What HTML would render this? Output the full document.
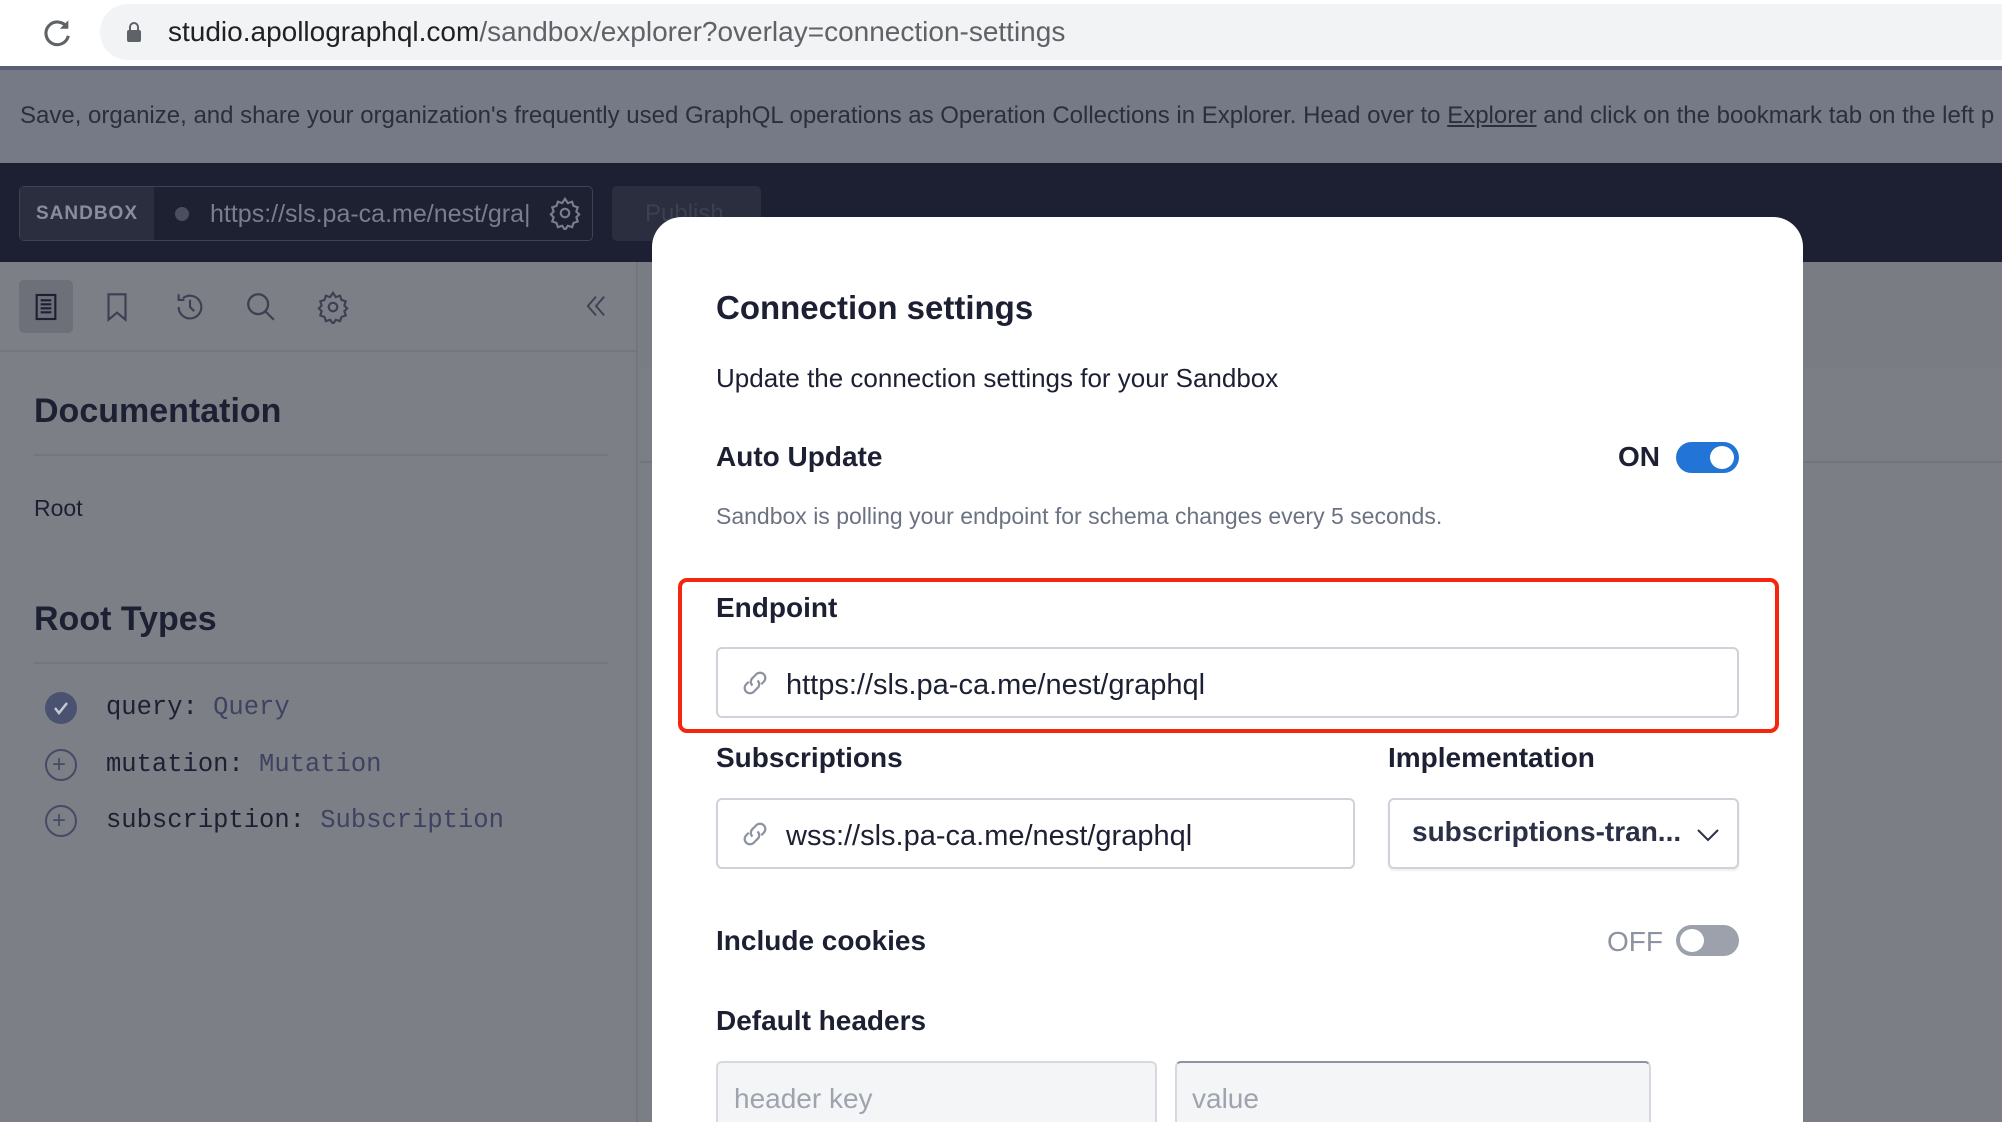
<!DOCTYPE html>
<html style="overflow:hidden;width:2002px;height:1122px"><head><meta charset="utf-8"><style>
*{box-sizing:border-box;margin:0;padding:0}
body{width:2002px;height:1122px;overflow:hidden;position:relative;background:#7c7e85;font-family:"Liberation Sans",sans-serif}
.abs{position:absolute}
.t{position:absolute;white-space:nowrap;line-height:1}
</style></head><body>
<!-- browser bar -->
<div class="abs" style="left:0;top:0;width:2002px;height:68px;background:#fff"></div>
<svg class="abs" style="left:40px;top:16px" width="34" height="34" viewBox="0 0 24 24"><path d="M19 8a8 8 0 1 0 1 6" fill="none" stroke="#5f6368" stroke-width="2.2"/><path d="M20 3v6h-6z" fill="#5f6368"/></svg>
<div class="abs" style="left:100px;top:4px;width:1902px;height:56px;background:#f1f3f4;border-radius:28px 0 0 28px"></div>
<svg class="abs" style="left:126px;top:21px" width="16" height="22" viewBox="0 0 16 22"><path d="M4 9V6a4 4 0 0 1 8 0v3" fill="none" stroke="#5f6368" stroke-width="2"/><rect x="1" y="9" width="14" height="12" rx="2" fill="#5f6368"/></svg>
<div class="t" style="left:168px;top:18px;font-size:28px;color:#202124">studio.apollographql.com<span style="color:#5f6368">/sandbox/explorer?overlay=connection-settings</span></div>
<div class="abs" style="left:0;top:66px;width:2002px;height:4px;background:#5a5f72"></div>
<!-- banner -->
<div class="abs" style="left:0;top:70px;width:2002px;height:93px;background:#767a86"></div>
<div class="t" style="left:20px;top:104px;font-size:24px;color:#2b2f3d">Save, organize, and share your organization's frequently used GraphQL operations as Operation Collections in Explorer. Head over to <u>Explorer</u> and click on the bookmark tab on the left p</div>
<!-- dark header -->
<div class="abs" style="left:0;top:163px;width:2002px;height:99px;background:#1c2032"></div>
<div class="abs" style="left:19px;top:186px;width:574px;height:55px;border:1.5px solid #3d4256;border-radius:5px;background:#1d2132"></div>
<div class="abs" style="left:20px;top:187px;width:134px;height:53px;background:#2a2e3e"></div>
<div class="t" style="left:36px;top:204px;font-size:19px;font-weight:bold;color:#8a8e9c;letter-spacing:1px">SANDBOX</div>
<div class="abs" style="left:175px;top:207px;width:14px;height:14px;border-radius:50%;background:#4a4e5e"></div>
<div class="t" style="left:210px;top:202px;font-size:25px;color:#7a7e8c">https://sls.pa-ca.me/nest/gra|</div>
<svg class="abs" style="left:548px;top:196px" width="34" height="34" viewBox="0 0 24 24" fill="none" stroke="#7a7e8c" stroke-width="1.5"><circle cx="12" cy="12" r="3"/><path d="M12 2l2 3 3-1 1 3 3 1-1 3 2 2-2 2 1 3-3 1-1 3-3-1-2 3-2-3-3 1-1-3-3-1 1-3-2-2 2-2-1-3 3-1 1-3 3 1z"/></svg>
<div class="abs" style="left:612px;top:186px;width:149px;height:55px;border-radius:5px;background:#2a2e3e"></div>
<div class="t" style="left:645px;top:202px;font-size:24px;color:#3c4152">Publish</div>
<!-- left panel -->
<div class="abs" style="left:0;top:262px;width:638px;height:860px;background:#7d7f86;border-right:2px solid #74767d"></div>
<div class="abs" style="left:0;top:350px;width:638px;height:2px;background:#74767d"></div>
<div class="abs" style="left:19px;top:280px;width:54px;height:53px;border-radius:5px;background:#6d7079"></div>
<svg class="abs" style="left:30px;top:290px" width="32" height="34" viewBox="0 0 24 24" fill="none" stroke="#1c2032" stroke-width="1.6"><rect x="5" y="3" width="14" height="18"/><path d="M8 7h8M8 10h8M8 13h8M8 16h8"/></svg>
<svg class="abs" style="left:100px;top:290px" width="34" height="34" viewBox="0 0 24 24" fill="none" stroke="#3c4053" stroke-width="1.5"><path d="M6 3h12v18l-6-5-6 5z"/></svg>
<svg class="abs" style="left:173px;top:290px" width="34" height="34" viewBox="0 0 24 24" fill="none" stroke="#3c4053" stroke-width="1.5"><path d="M4 12a8 8 0 1 0 3-6.2"/><path d="M4 3v4h4"/><path d="M12 7v5l3 3"/></svg>
<svg class="abs" style="left:244px;top:290px" width="34" height="34" viewBox="0 0 24 24" fill="none" stroke="#3c4053" stroke-width="1.6"><circle cx="10" cy="10" r="7"/><path d="M15 15l6 6"/></svg>
<svg class="abs" style="left:316px;top:290px" width="34" height="34" viewBox="0 0 24 24" fill="none" stroke="#3c4053" stroke-width="1.5"><circle cx="12" cy="12" r="3"/><path d="M12 2l2 3 3-1 1 3 3 1-1 3 2 2-2 2 1 3-3 1-1 3-3-1-2 3-2-3-3 1-1-3-3-1 1-3-2-2 2-2-1-3 3-1 1-3 3 1z"/></svg>
<svg class="abs" style="left:582px;top:292px" width="28" height="28" viewBox="0 0 24 24" fill="none" stroke="#3c4053" stroke-width="1.6"><path d="M12 4l-7 8 7 8M19 4l-7 8 7 8"/></svg>
<div class="t" style="left:34px;top:394px;font-size:34px;font-weight:bold;color:#1c2032">Documentation</div>
<div class="abs" style="left:34px;top:454px;width:574px;height:2px;background:#74767d"></div>
<div class="t" style="left:34px;top:497px;font-size:23px;color:#1c2032">Root</div>
<div class="t" style="left:34px;top:602px;font-size:34px;font-weight:bold;color:#1c2032">Root Types</div>
<div class="abs" style="left:34px;top:662px;width:574px;height:2px;background:#74767d"></div>
<div class="abs" style="left:45px;top:692px;width:32px;height:32px;border-radius:50%;background:#4a5272"></div>
<svg class="abs" style="left:45px;top:692px" width="32" height="32" viewBox="0 0 32 32" fill="none" stroke="#c6cad6" stroke-width="2.5"><path d="M10 16l4 5 8-10"/></svg>
<div class="abs" style="left:45px;top:749px;width:32px;height:32px;border-radius:50%;border:2px solid #454b66"></div>
<div class="t" style="left:52px;top:753px;font-size:24px;color:#454b66">+</div>
<div class="abs" style="left:45px;top:805px;width:32px;height:32px;border-radius:50%;border:2px solid #454b66"></div>
<div class="t" style="left:52px;top:809px;font-size:24px;color:#454b66">+</div>
<div class="t" style="left:106px;top:695px;font-family:'Liberation Mono',monospace;font-size:25.5px;color:#1c2032">query: <span style="color:#3d4360">Query</span></div>
<div class="t" style="left:106px;top:752px;font-family:'Liberation Mono',monospace;font-size:25.5px;color:#1c2032">mutation: <span style="color:#3d4360">Mutation</span></div>
<div class="t" style="left:106px;top:808px;font-family:'Liberation Mono',monospace;font-size:25.5px;color:#1c2032">subscription: <span style="color:#3d4360">Subscription</span></div>
<!-- right area -->
<div class="abs" style="left:640px;top:262px;width:1362px;height:106px;background:#7a7c83"></div>
<div class="abs" style="left:640px;top:461px;width:1362px;height:2px;background:#72747b"></div>
<!-- modal -->
<div class="abs" style="left:652px;top:217px;width:1151px;height:905px;background:#fff;border-radius:30px 30px 0 0"></div>
<div class="t" style="left:716px;top:291px;font-size:33px;font-weight:bold;color:#1c2032">Connection settings</div>
<div class="t" style="left:716px;top:365px;font-size:26px;color:#1c2032">Update the connection settings for your Sandbox</div>
<div class="t" style="left:716px;top:443px;font-size:28px;font-weight:bold;color:#1c2032">Auto Update</div>
<div class="t" style="left:1618px;top:443px;font-size:28px;font-weight:bold;color:#1c2032">ON</div>
<div class="abs" style="left:1676px;top:442px;width:63px;height:31px;border-radius:16px;background:#2275d7"></div>
<div class="abs" style="left:1710px;top:446px;width:24px;height:23px;border-radius:50%;background:#fff"></div>
<div class="t" style="left:716px;top:505px;font-size:23px;color:#6b7282">Sandbox is polling your endpoint for schema changes every 5 seconds.</div>
<div class="abs" style="left:678px;top:578px;width:1101px;height:155px;border:4px solid #f5260e;border-radius:9px"></div>
<div class="t" style="left:716px;top:594px;font-size:28px;font-weight:bold;color:#1c2032">Endpoint</div>
<div class="abs" style="left:716px;top:647px;width:1023px;height:71px;border:2px solid #cfd2d8;border-radius:6px"></div>
<svg class="abs" style="left:738px;top:668px" width="34" height="30" viewBox="0 0 24 24" fill="none" stroke="#8d93a0" stroke-width="1.8"><path d="M10 14a4 4 0 0 1 0-6l3-3a4 4 0 0 1 6 6l-2 2"/><path d="M14 10a4 4 0 0 1 0 6l-3 3a4 4 0 0 1-6-6l2-2"/></svg>
<div class="t" style="left:786px;top:671px;font-size:29px;color:#1c2032">https://sls.pa-ca.me/nest/graphql</div>
<div class="t" style="left:716px;top:744px;font-size:28px;font-weight:bold;color:#1c2032">Subscriptions</div>
<div class="t" style="left:1388px;top:744px;font-size:28px;font-weight:bold;color:#1c2032">Implementation</div>
<div class="abs" style="left:716px;top:798px;width:639px;height:71px;border:2px solid #cfd2d8;border-radius:6px"></div>
<svg class="abs" style="left:738px;top:819px" width="34" height="30" viewBox="0 0 24 24" fill="none" stroke="#8d93a0" stroke-width="1.8"><path d="M10 14a4 4 0 0 1 0-6l3-3a4 4 0 0 1 6 6l-2 2"/><path d="M14 10a4 4 0 0 1 0 6l-3 3a4 4 0 0 1-6-6l2-2"/></svg>
<div class="t" style="left:786px;top:822px;font-size:29px;color:#1c2032">wss://sls.pa-ca.me/nest/graphql</div>
<div class="abs" style="left:1388px;top:798px;width:351px;height:71px;border:2px solid #cfd2d8;border-radius:6px;box-shadow:0 2px 2px #eee"></div>
<div class="t" style="left:1412px;top:818px;font-size:28px;font-weight:bold;color:#2b3046">subscriptions-tran...</div>
<svg class="abs" style="left:1695px;top:824px" width="26" height="20" viewBox="0 0 26 20" fill="none" stroke="#2b3046" stroke-width="2"><path d="M3 6l10 10 10-10"/></svg>
<div class="t" style="left:716px;top:927px;font-size:28px;font-weight:bold;color:#1c2032">Include cookies</div>
<div class="t" style="left:1607px;top:928px;font-size:28px;color:#8d93a0">OFF</div>
<div class="abs" style="left:1676px;top:925px;width:63px;height:31px;border-radius:16px;background:#9ca1ab"></div>
<div class="abs" style="left:1680px;top:929px;width:24px;height:23px;border-radius:50%;background:#fff"></div>
<div class="t" style="left:716px;top:1007px;font-size:28px;font-weight:bold;color:#1c2032">Default headers</div>
<div class="abs" style="left:716px;top:1061px;width:441px;height:61px;border:2px solid #d6d9de;border-bottom:none;border-radius:6px 6px 0 0;background:#f4f5f7"></div>
<div class="t" style="left:734px;top:1085px;font-size:28px;color:#9ea3ad">header key</div>
<div class="abs" style="left:1175px;top:1061px;width:476px;height:61px;border:2px solid #d6d9de;border-top-color:#8d93a0;border-bottom:none;border-radius:6px 6px 0 0;background:#f4f5f7"></div>
<div class="t" style="left:1192px;top:1085px;font-size:28px;color:#9ea3ad">value</div>
</body></html>
